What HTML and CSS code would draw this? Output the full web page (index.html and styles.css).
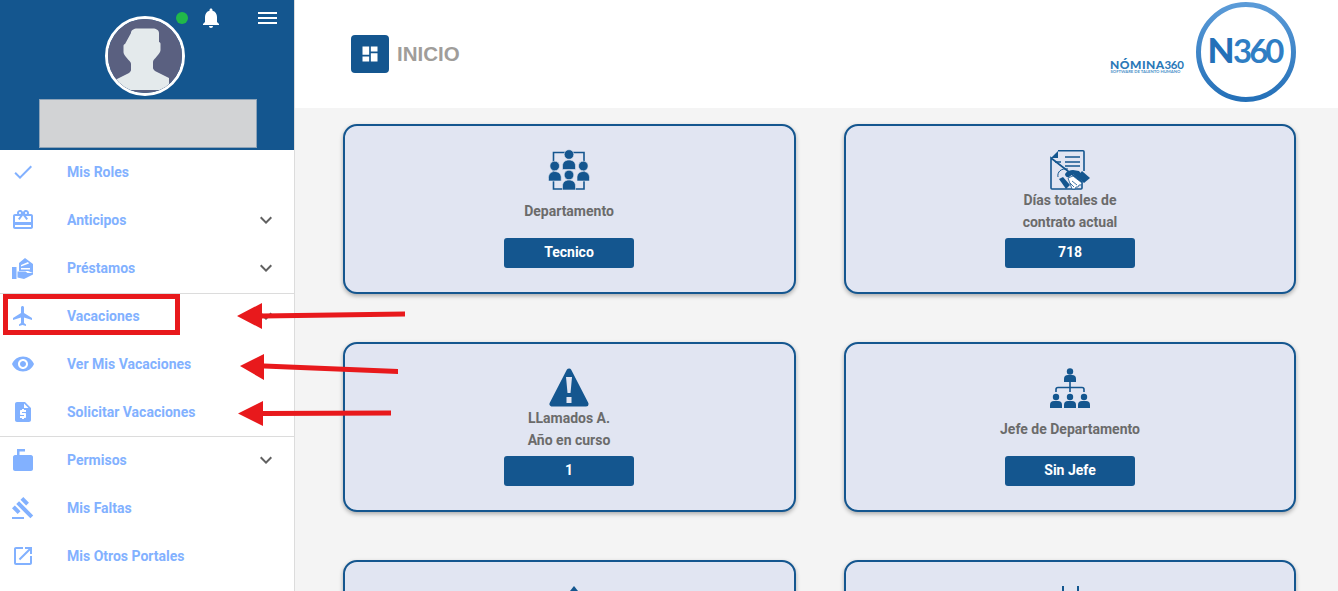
FILE: index.html
```html
<!DOCTYPE html>
<html lang="es">
<head>
    <meta charset="UTF-8">
    <meta name="viewport" content="width=device-width, initial-scale=1.0">
    <title>Nomina 360</title>
    <link rel="stylesheet" href="styles.css">
</head>
<body>
    <div class="page">
        <aside class="sidebar">
            <div class="profile">
                <div class="profile-actions">
                    <span class="status-dot"></span>
                    <svg class="bell" viewBox="0 0 24 24"><path d="M12 22c1.1 0 2-.9 2-2h-4c0 1.1.89 2 2 2zm6-6v-5c0-3.07-1.64-5.64-4.5-6.32V4c0-.83-.67-1.5-1.5-1.5s-1.5.67-1.5 1.5v.68C7.63 5.36 6 7.92 6 11v5l-2 2v1h16v-1l-2-2z"/></svg>
                    <div class="burger"><span></span><span></span><span></span></div>
                </div>
                <div class="avatar">
                    <svg viewBox="0 0 74 74">
                        <rect width="74" height="74" fill="#5a6080"/>
                        <path d="M23 15c0-3 3-4.500 6-4.500h16c3 0 6 1.500 6 4.500v9c1 0 1.500 1 1.500 2v6c0 3-3 5-5 8-1 1-2.500 2-2.500 4v6c0 1 1 2 2 3l14 7v12H7V62l14-7c1-1 2-2 2-3v-6c0-2-1.500-3-2.500-4-2-3-5-5-5-8v-6c0-1 .5-2 1.500-2z" transform="translate(0 -1)" fill="#e4eaec"/>
                    </svg>
                </div>
                <div class="profile-name"></div>
            </div>
            <nav class="menu">
                <a class="menu-item">
                    <svg class="menu-icon" viewBox="0 0 24 24"><path d="M9 16.17L4.83 12l-1.42 1.41L9 19 21 7l-1.41-1.41z"/></svg>
                    <span>Mis Roles</span>
                </a>
                <a class="menu-item">
                    <svg class="menu-icon" viewBox="0 0 24 24"><path d="M20 6h-2.18c.11-.31.18-.65.18-1 0-1.66-1.34-3-3-3-1.05 0-1.96.54-2.5 1.35l-.5.67-.5-.68C10.96 2.54 10.05 2 9 2 7.34 2 6 3.34 6 5c0 .35.07.69.18 1H4c-1.11 0-1.99.89-1.99 2L2 19c0 1.11.89 2 2 2h16c1.11 0 2-.89 2-2V8c0-1.11-.89-2-2-2zm-5-2c.55 0 1 .45 1 1s-.45 1-1 1-1-.45-1-1 .45-1 1-1zM9 4c.55 0 1 .45 1 1s-.45 1-1 1-1-.45-1-1 .45-1 1-1zm11 15H4v-2h16v2zm0-5H4V8h5.08L7 10.83 8.62 12 11 8.76l1-1.36 1 1.36L15.38 12 17 10.83 14.92 8H20v6z"/></svg>
                    <span>Anticipos</span>
                    <svg class="chevron" viewBox="0 0 24 24"><path d="M16.59 8.59L12 13.17 7.41 8.59 6 10l6 6 6-6z"/></svg>
                </a>
                <a class="menu-item menu-item-last">
                    <svg class="menu-icon" viewBox="0 0 24 24">
                        <path d="M1 11h4.500v12H1zM14 2l8 6v9l-5-2H8V7z"/>
                        <path d="M10 9l7-3 1 1.500-8 3zM10 12h9v1.500h-9z" fill="#fff"/>
                        <path d="M6.500 15.500h8l2 1.500h5.500v1.500L13 23l-6.500-1.500z"/>
                    </svg>
                    <span>Préstamos</span>
                    <svg class="chevron" viewBox="0 0 24 24"><path d="M16.59 8.59L12 13.17 7.41 8.59 6 10l6 6 6-6z"/></svg>
                </a>
                <a class="menu-item">
                    <svg class="menu-icon" viewBox="0 0 24 24"><path d="M21 16v-2l-8-5V3.500c0-.83-.67-1.500-1.500-1.500S10 2.670 10 3.500V9l-8 5v2l8-2.500V19l-2 1.500V22l3.500-1 3.500 1v-1.500L13 19v-5.500l8 2.500z"/></svg>
                    <span>Vacaciones</span>
                    <svg class="chevron" viewBox="0 0 24 24"><path d="M16.59 8.59L12 13.17 7.41 8.59 6 10l6 6 6-6z"/></svg>
                </a>
                <a class="menu-item">
                    <svg class="menu-icon" viewBox="0 0 24 24"><path d="M12 4.500C7 4.500 2.730 7.610 1 12c1.730 4.390 6 7.500 11 7.500s9.270-3.110 11-7.500c-1.730-4.390-6-7.500-11-7.500zM12 17c-2.760 0-5-2.240-5-5s2.240-5 5-5 5 2.240 5 5-2.240 5-5 5zm0-8c-1.660 0-3 1.340-3 3s1.340 3 3 3 3-1.340 3-3-1.340-3-3-3z"/></svg>
                    <span>Ver Mis Vacaciones</span>
                </a>
                <a class="menu-item menu-item-last menu-item-short">
                    <svg class="menu-icon" viewBox="0 0 24 24"><path d="M14 2H6c-1.100 0-1.990.900-1.990 2L4 20c0 1.100.890 2 1.990 2H18c1.100 0 2-.900 2-2V8l-6-6zm1 10h-4v1h3c.550 0 1 .450 1 1v3c0 .550-.450 1-1 1h-1v1h-2v-1H9v-2h4v-1h-3c-.550 0-1-.450-1-1v-3c0-.550.450-1 1-1h1V9h2v1h2v2zm-2-4V3.500L17.500 8H13z"/></svg>
                    <span>Solicitar Vacaciones</span>
                </a>
                <a class="menu-item menu-item-tall">
                    <svg class="menu-icon" viewBox="0 0 24 24"><path d="M6 1h8v2.500H8.500V7H20c1 0 2 1 2 2v12c0 1-1 2-2 2H4c-1 0-2-1-2-2V9c0-1 1-2 2-2h2z"/></svg>
                    <span>Permisos</span>
                    <svg class="chevron" viewBox="0 0 24 24"><path d="M16.59 8.59L12 13.17 7.41 8.59 6 10l6 6 6-6z"/></svg>
                </a>
                <a class="menu-item">
                    <svg class="menu-icon" viewBox="0 0 24 24"><path d="M1 21h12v2H1zM5.245 8.070l2.830-2.827 14.140 14.142-2.828 2.828zM12.317 1l5.657 5.656-2.830 2.830-5.654-5.660zM3.825 9.485l5.657 5.657-2.828 2.828-5.657-5.657z"/></svg>
                    <span>Mis Faltas</span>
                </a>
                <a class="menu-item">
                    <svg class="menu-icon" viewBox="0 0 24 24"><path d="M19 19H5V5h7V3H5c-1.110 0-2 .900-2 2v14c0 1.100.890 2 2 2h14c1.100 0 2-.900 2-2v-7h-2v7zM14 3v2h3.590l-9.830 9.830 1.410 1.410L19 6.410V10h2V3h-7z"/></svg>
                    <span>Mis Otros Portales</span>
                </a>
            </nav>
        </aside>

        <main class="content">
            <header class="topbar">
                <div class="page-title">
                    <span class="title-icon">
                        <svg viewBox="0 0 24 24"><path d="M3 13h8V3H3v10zm0 8h8v-6H3v6zm10 0h8V11h-8v10zm0-18v6h8V3h-8z"/></svg>
                    </span>
                    <h1>INICIO</h1>
                </div>
                <svg class="logo" viewBox="0 0 190 104">
                    <defs>
                        <linearGradient id="logoGrad" x1="0" y1="0" x2="0" y2="1">
                            <stop offset="0" stop-color="#5b9bd8"/>
                            <stop offset="1" stop-color="#2470b8"/>
                        </linearGradient>
                    </defs>
                    <text class="logo-name" x="2" y="66.500">NÓMINA</text>
                    <text class="logo-num" x="56.500" y="66.500">360</text>
                    <text class="logo-sub" x="2.500" y="71">SOFTWARE DE TALENTO HUMANO</text>
                    <circle cx="138" cy="50" r="47.500" fill="none" stroke="url(#logoGrad)" stroke-width="5"/>
                    <text class="logo-n" x="99.500" y="61" fill="#2470b8">N</text>
                    <text class="logo-360" x="125" y="61" fill="#2f7ec4">360</text>
                </svg>
            </header>

            <section class="cards">
                <article class="card">
                    <div class="card-icon">
                        <svg viewBox="0 0 40 40">
                            <path d="M4.500 2.500h30.500v36.500H4.500z" fill="none" stroke="#14568f" stroke-width="1.600"/>
                            <g fill="#14568f" stroke="#e1e5f2" stroke-width=".6">
                                <circle cx="20" cy="4.500" r="4.800"/>
                                <path d="M13.500 19.500v-3.500c0-4 3-6 6.500-6s6.500 2 6.500 6v3.500z"/>
                                <circle cx="5.700" cy="16" r="4.800"/>
                                <path d="M-.5 31v-3.500c0-4 3-6 6.200-6s6.500 2 6.500 6V31z"/>
                                <circle cx="34.300" cy="16" r="4.800"/>
                                <path d="M28 31v-3.500c0-4 3-6 6.300-6s6.200 2 6.200 6V31z"/>
                                <circle cx="20" cy="25" r="4.800"/>
                                <path d="M13.500 40v-4c0-4 3-6 6.500-6s6.500 2 6.500 6v4z"/>
                            </g>
                        </svg>
                    </div>
                    <div class="card-label">Departamento</div>
                    <div class="card-value">Tecnico</div>
                </article>

                <article class="card">
                    <div class="card-icon">
                        <svg viewBox="0 0 40 40">
                            <path d="M8 .8h25c.6 0 1 .4 1 1V21M32 32v6c0 .6-.4 1-1 1H2c-.6 0-1-.4-1-1V8z" fill="none" stroke="#14568f" stroke-width="1.600"/>
                            <path d="M1 8l7-7v7z" fill="#14568f"/>
                            <path d="M15 7h15M15 12h15M15 16h15M5 12h6" stroke="#14568f" stroke-width="1.500"/>
                            <path d="M8 27c-1-5 3-9 10-8" fill="none" stroke="#14568f" stroke-width="1"/>
                            <path d="M15 24c2-3 5-4 8-4l6 1 4 5-3 4-7-6-4 3c-2 1-4-1-4-3z" fill="#14568f"/>
                            <path d="M32 21l8 7-6 5-7-6z" fill="#14568f"/>
                            <path d="M9 29l4-2 7 8-4 4z" fill="#14568f"/>
                            <path d="M18 28l5-2 9 7-1 2h-2l-1 2h-2l-1 2h-3z" fill="#fff" stroke="#14568f" stroke-width=".8"/>
                            <path d="M22 31l5 4M20 33l4 4" stroke="#14568f" stroke-width=".8"/>
                        </svg>
                    </div>
                    <div class="card-label">Días totales de<br>contrato actual</div>
                    <div class="card-value">718</div>
                </article>

                <article class="card">
                    <div class="card-icon">
                        <svg viewBox="0 0 40 40">
                            <path d="M20 3L3 36h34z" fill="#14568f" stroke="#14568f" stroke-width="5" stroke-linejoin="round"/>
                            <path d="M17 9h6l-1.500 16h-3z" fill="#e1e5f2"/>
                            <rect x="17.500" y="29" width="5" height="6" fill="#e1e5f2"/>
                        </svg>
                    </div>
                    <div class="card-label">LLamados A.<br>Año en curso</div>
                    <div class="card-value">1</div>
                </article>

                <article class="card">
                    <div class="card-icon">
                        <svg viewBox="0 0 40 40">
                            <g fill="#14568f">
                                <circle cx="20" cy="3.500" r="3.200"/>
                                <path d="M14 14v-3a4 4 0 0 1 4-4h4a4 4 0 0 1 4 4v3z"/>
                                <circle cx="6" cy="29" r="3.200"/>
                                <path d="M0 40v-3a4 4 0 0 1 4-4h4a4 4 0 0 1 4 4v3z"/>
                                <circle cx="20" cy="29" r="3.200"/>
                                <path d="M14 40v-3a4 4 0 0 1 4-4h4a4 4 0 0 1 4 4v3z"/>
                                <circle cx="34" cy="29" r="3.200"/>
                                <path d="M28 40v-3a4 4 0 0 1 4-4h4a4 4 0 0 1 4 4v3z"/>
                            </g>
                            <path d="M20 14v10M6 24v-2.500a2 2 0 0 1 2-2h24a2 2 0 0 1 2 2V24" fill="none" stroke="#14568f" stroke-width="1.600"/>
                        </svg>
                    </div>
                    <div class="card-label">Jefe de Departamento</div>
                    <div class="card-value">Sin Jefe</div>
                </article>

                <article class="card">
                    <div class="card-icon">
                        <svg viewBox="0 0 40 40"><path d="M25 0l8 10H17z" fill="#14568f"/></svg>
                    </div>
                </article>

                <article class="card">
                    <div class="card-icon">
                        <svg viewBox="0 0 40 40"><path d="M12 0h2v8h-2zM27 0h2v8h-2z" fill="#14568f"/></svg>
                    </div>
                </article>
            </section>
        </main>

        <!-- marcas rojas sobre la captura -->
        <div class="mark-box"></div>
        <svg class="marks" viewBox="0 0 1338 591">
            <g fill="#e8191c">
                <path d="M237 316l25-13v10.500l143-2v5l-143 2V329z"/>
                <path d="M240 366l24-12v9.500l134 5.500v5l-134-5.500V380z"/>
                <path d="M238 413.500l25-12.500v10l128-.500v5l-128 .500V426z"/>
            </g>
        </svg>
    </div>
</body>
</html>
```

FILE: styles.css
```css
* {
    box-sizing: border-box;
}
body {
    margin: 0;
    padding: 0;
    font-family: Roboto, "Liberation Sans", sans-serif;
    background-color: #f4f4f4;
    overflow: hidden;
}
.page {
    position: relative;
    display: flex;
    width: 100%;
    height: 100vh;
    overflow: hidden;
}

/* menu lateral */
.sidebar {
    flex: 0 0 295px;
    background-color: #fff;
    border-right: 1px solid #dcdcdc;
}
.profile {
    position: relative;
    height: 150px;
    padding-top: 16px;
    background-color: #14568f;
}
.profile-actions {
    position: absolute;
    top: 0;
    left: 0;
    width: 100%;
    height: 36px;
}
.status-dot {
    position: absolute;
    left: 176px;
    top: 12px;
    width: 12px;
    height: 12px;
    border-radius: 50%;
    background-color: #21b84a;
}
.bell {
    position: absolute;
    left: 199px;
    top: 6px;
    width: 24px;
    height: 24px;
    fill: #fff;
}
.burger {
    position: absolute;
    left: 258px;
    top: 12px;
    display: flex;
    flex-direction: column;
    gap: 3px;
    width: 19px;
}
.burger span {
    height: 2px;
    background-color: #fff;
}
.avatar {
    width: 80px;
    height: 80px;
    margin-left: 105px;
    border: 3px solid #fff;
    border-radius: 50%;
    overflow: hidden;
}
.avatar svg {
    display: block;
    width: 100%;
    height: 100%;
}
.profile-name {
    width: 218px;
    height: 49px;
    margin: 3px 0 0 39px;
    background-color: #d2d3d5;
    border: 1px solid #8da3b8;
}
.menu {
    display: flex;
    flex-direction: column;
}
.menu-item {
    display: flex;
    align-items: center;
    gap: 32px;
    height: 48px;
    padding: 0 16px 4px 11px;
    font-size: 14px;
    font-weight: 700;
    color: #82b1ff;
}
.menu-item-last {
    border-bottom: 1px solid #dcdcdc;
}
.menu-item-short {
    height: 47px;
    padding-bottom: 3px;
}
.menu-item-tall {
    height: 49px;
    padding-top: 1px;
}
.menu-icon {
    flex: 0 0 24px;
    width: 24px;
    height: 24px;
    fill: #82b1ff;
}
.chevron {
    width: 24px;
    height: 24px;
    margin-left: auto;
    fill: #616161;
}

/* contenido */
.content {
    flex: 1;
    min-width: 0;
}
.topbar {
    display: flex;
    justify-content: space-between;
    align-items: center;
    height: 108px;
    padding: 0 40px 0 56px;
    background-color: #fff;
}
.page-title {
    display: flex;
    align-items: center;
    gap: 8px;
}
.page-title h1 {
    margin: 0;
    font-family: "Liberation Sans", sans-serif;
    font-size: 20.500px;
    font-weight: 700;
    color: #a09d9a;
}
.title-icon {
    display: flex;
    justify-content: center;
    align-items: center;
    width: 38px;
    height: 38px;
    border-radius: 4px;
    background-color: #14568f;
}
.title-icon svg {
    width: 20px;
    height: 20px;
    fill: #fff;
}
.logo {
    display: block;
    width: 190px;
    height: 104px;
}
.logo text {
    font-family: Lato, "Liberation Sans", sans-serif;
}
.logo-name {
    font-size: 12px;
    font-weight: 900;
    letter-spacing: .5px;
    fill: #2a78b8;
}
.logo-num {
    font-size: 11.500px;
    font-weight: 700;
    letter-spacing: -.3px;
    fill: #2a78b8;
}
.logo-sub {
    font-size: 4.200px;
    font-weight: 700;
    fill: #4a8fc8;
}
.logo-n {
    font-size: 35px;
    font-weight: 900;
}
.logo-360 {
    font-size: 33px;
    letter-spacing: -3px;
    font-weight: 700;
}

/* tarjetas */
.cards {
    display: grid;
    grid-template-columns: 453px 452px;
    gap: 48px;
    margin-top: 16px;
    padding-left: 48px;
}
.card {
    display: flex;
    flex-direction: column;
    align-items: center;
    height: 170px;
    padding-top: 24px;
    background-color: #e1e5f2;
    border: 2px solid #14568f;
    border-radius: 14px;
    box-shadow: 0 2px 4px rgba(0, 0, 0, 0.3);
}
.card:nth-child(odd) {
    padding-right: 1px;
}
.card-icon {
    width: 40px;
    height: 39px;
}
.card-icon svg {
    display: block;
    width: 40px;
    height: 40px;
    overflow: visible;
}
.card-label {
    display: flex;
    align-items: center;
    height: 44px;
    margin-bottom: 5px;
    font-size: 14px;
    font-weight: 700;
    line-height: 22px;
    text-align: center;
    color: #6b6b6b;
}
.card-value {
    width: 130px;
    height: 30px;
    border-radius: 3px;
    background-color: #14568f;
    font-size: 14px;
    font-weight: 700;
    line-height: 28px;
    text-align: center;
    color: #fff;
}

/* marcas */
.mark-box {
    position: absolute;
    left: 3px;
    top: 294px;
    width: 177px;
    height: 41px;
    border: 5px solid #e8191c;
}
.marks {
    position: absolute;
    left: 0;
    top: 0;
    width: 1338px;
    height: 591px;
    pointer-events: none;
}
```
